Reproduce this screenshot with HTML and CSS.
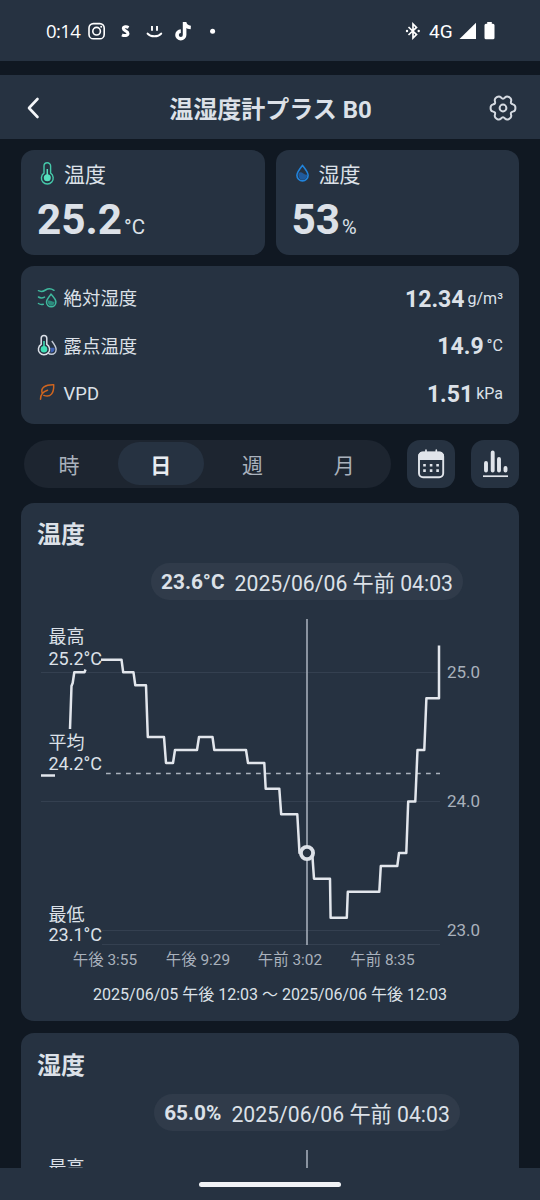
FILE: index.html
```html
<!DOCTYPE html>
<html lang="ja">
<head>
    <meta charset="UTF-8">
    <meta name="viewport" content="width=device-width, initial-scale=1.0">
    <title>温湿度計プラス B0</title>
    <link rel="stylesheet" href="styles.css">
</head>
<body>
    <div class="screen">
        <div class="status-bar">
            <span class="clock">0:14</span>
            <svg class="status-left" width="140" height="24" viewBox="84 19 140 24">
                <g fill="none" stroke="#fff" stroke-width="1.6">
                    <rect x="89" y="23.6" width="15.2" height="15.2" rx="4.4"/>
                    <circle cx="96.6" cy="31.2" r="3.8"/>
                    <path d="M147.600 33.600c2.800 3.600 10.800 3.600 13.600 0" stroke-width="2" stroke-linecap="round"/>
                    <path d="M152 26v4.800M157 26v4.800" stroke-width="1.9"/>
                    <path d="M128.600 27.500c-2.200-1.200-5.200-.9-5.300 1.100 0 2.500 4.700 2.100 4.700 4.900 0 2.300-3.700 2.600-6 1.400" stroke-width="3"/>
                    <path d="M184.600 22v12.900a3.800 3.800 0 1 1-3.800-3.800M184.600 22.300c.4 3 2.700 5 6.200 5.200" stroke-width="3.600"/>
                </g>
                <circle cx="101.200" cy="26.800" r="1" fill="#fff"/>
                <circle cx="212.600" cy="31.200" r="2.500" fill="#fff"/>
            </svg>
            <svg class="bluetooth" width="16" height="20" viewBox="0 0 16 20">
                <path d="M3.500 6 11.500 13.600 8 17V3l3.500 3.400L3.500 14" fill="none" stroke="#fff" stroke-width="1.7"/>
                <circle cx="2" cy="10" r="1.200" fill="#fff"/>
                <circle cx="13.700" cy="10" r="1.200" fill="#fff"/>
            </svg>
            <span class="network">4G</span>
            <svg class="signal" width="18" height="18" viewBox="0 0 18 18">
                <path d="M0.500 17 17 .8V17z" fill="#fff"/>
            </svg>
            <svg class="battery" width="11" height="18" viewBox="0 0 11 18">
                <path d="M3.200 0h4.600v1.700H9a1.500 1.500 0 0 1 1.500 1.500v12.600A1.500 1.500 0 0 1 9 17.300H2a1.500 1.500 0 0 1-1.500-1.500V3.200A1.500 1.500 0 0 1 2 1.700h1.200z" fill="#fff"/>
            </svg>
        </div>

        <div class="header">
            <svg class="back" width="14" height="22" viewBox="0 0 14 22">
                <path d="M11.500 2 3 11l8.500 9" fill="none" stroke="#f4f6f9" stroke-width="2.600" stroke-linecap="round" stroke-linejoin="round"/>
            </svg>
            <h1>温湿度計プラス B0</h1>
            <svg class="gear" width="28" height="28" viewBox="-14 -14 28 28">
                <g fill="none" stroke="#d5dae1" stroke-width="2">
                    <path id="gear-half" d="M12.400 0Q12.470 2.880 10.450 3.400 8.430 3.930 8.030 4.630 7.620 5.330 8.180 7.350 8.730 9.360 6.240 10.800 3.740 12.240 2.280 10.750.810 9.260 0 9.260-.810 9.260-2.280 10.750-3.740 12.240-6.240 10.800-8.730 9.360-8.180 7.350-7.620 5.330-8.030 4.630-8.430 3.930-10.450 3.400-12.470 2.880-12.400 0"/>
                    <use href="#gear-half" transform="scale(1 -1)"/>
                    <circle r="3.400"/>
                </g>
            </svg>
        </div>

        <div class="content">
            <div class="summary">
                <div class="card reading">
                    <div class="reading-label">
                        <svg class="icon" width="20" height="24" viewBox="0 0 20 24">
                            <path d="M7 12.200V5a3.300 3.300 0 0 1 6.600 0v7.200a5.900 5.900 0 1 1-6.600 0z" fill="none" stroke="#45c9aa" stroke-width="1.400"/>
                            <path d="M10.300 8v8" stroke="#55e0bd" stroke-width="1.500"/>
                            <circle cx="10.300" cy="16.700" r="3.500" fill="#55e0bd"/>
                        </svg>
                        <span>温度</span>
                    </div>
                    <div class="reading-value">25.2<span class="unit">°C</span></div>
                </div>
                <div class="card reading">
                    <div class="reading-label">
                        <svg class="icon" width="20" height="24" viewBox="0 0 20 24">
                            <path d="M10.500 4.400c-3 3.700-5.600 6.800-5.600 9.900a5.600 5.600 0 0 0 11.200 0c0-3.100-2.600-6.200-5.600-9.900z" fill="#263241" stroke="#2184dc" stroke-width="1.600"/>
                            <path d="M6.600 12q2.400-1.500 4.400.3t4 1.200c.5 3-1.600 5.300-4.500 5.300s-4.600-3-3.900-6.800z" fill="#205a9c"/>
                        </svg>
                        <span>湿度</span>
                    </div>
                    <div class="reading-value">53<span class="unit percent">%</span></div>
                </div>
            </div>

            <div class="card details">
                <div class="detail-row">
                    <svg class="icon" width="20" height="22" viewBox="0 0 20 22">
                        <g fill="none" stroke="#3fb99e" stroke-width="1.500" stroke-linecap="round">
                            <path d="M1.500 3.700c3 1.600 5 .6 7-.7s5.500-1.700 8.500.3M1.500 10c2 1.300 4 1.100 6 .1M1.500 16.500c1.500 1 3 1.300 4.700.8"/>
                            <path d="M14 7.200c-2.500 3-4.500 5.400-4.500 7.900a4.700 4.700 0 0 0 9.400 0c0-2.500-2.200-4.900-4.900-7.900z"/>
                        </g>
                        <path d="M10.800 13.800c2.300-1 4.300 1.400 6.800.8.300 2.500-1.300 4.200-3.400 4.200s-3.900-2.300-3.400-5z" fill="#2b8b7d"/>
                    </svg>
                    <span class="detail-label">絶対湿度</span>
                    <span class="detail-value">12.34</span>
                    <span class="detail-unit">g/m³</span>
                </div>
                <div class="detail-row">
                    <svg class="icon" width="20" height="22" viewBox="0 0 20 22">
                        <path d="M14.800 7c2.500 3.200 4.300 5.700 4.300 8.500 0 2.800-2 4.700-4.500 4.700-1.500 0-2.600-.4-3.500-1.300" fill="none" stroke="#c3cad6" stroke-width="1.400"/>
                        <path d="M13 13.800h4.600c.2 3-1.300 5-4.400 4.800.9-1.500.9-3-.2-4.800z" fill="#3d60b4"/>
                        <path d="M4.200 10.400V4.200a2.800 2.800 0 0 1 5.600 0v6.200a5.600 5.600 0 1 1-5.600 0z" fill="#263241" stroke="#dce1e8" stroke-width="1.500"/>
                        <path d="M7 7v8" stroke="#40d9b2" stroke-width="1.600"/>
                        <circle cx="7" cy="15.200" r="3.300" fill="#40dfb6"/>
                    </svg>
                    <span class="detail-label">露点温度</span>
                    <span class="detail-value">14.9</span>
                    <span class="detail-unit">°C</span>
                </div>
                <div class="detail-row">
                    <svg class="icon" width="20" height="22" viewBox="0 0 20 22">
                        <path d="M3.500 17.200c0-5 2.500-7.500 7-8.900M5.200 11C3.400 6 8 2.500 16.700 2.700c.3 8.400-3 13.200-9.900 10.700" fill="none" stroke="#cf651f" stroke-width="1.500" stroke-linecap="round" stroke-linejoin="round"/>
                    </svg>
                    <span class="detail-label latin">VPD</span>
                    <span class="detail-value">1.51</span>
                    <span class="detail-unit">kPa</span>
                </div>
            </div>

            <div class="toolbar">
                <div class="tabs">
                    <button class="tab">時</button>
                    <button class="tab active">日</button>
                    <button class="tab">週</button>
                    <button class="tab">月</button>
                </div>
                <button class="tool-button" aria-label="カレンダー">
                    <svg width="28" height="30" viewBox="0 0 28 30">
                        <rect x="2" y="3.500" width="24.200" height="24.800" rx="4" fill="none" stroke="#e0e4ea" stroke-width="1.900"/>
                        <path d="M1.200 11V7a4.200 4.200 0 0 1 4.200-4.200h17.400A4.200 4.200 0 0 1 27 7v4z" fill="#e0e4ea"/>
                        <path d="M9 1.200v4M19.300 1.200v4" stroke="#e0e4ea" stroke-width="1.700" stroke-linecap="round"/>
                        <path d="M6.200 14.900h2.600v2.600H6.200zM12.800 14.900h2.600v2.600h-2.600zM19.300 14.900h2.600v2.600h-2.600zM6.200 20.300h2.600v2.600H6.200zM12.800 20.300h2.600v2.600h-2.600zM19.300 20.300h2.600v2.600h-2.600z" fill="#e0e4ea"/>
                    </svg>
                </button>
                <button class="tool-button" aria-label="グラフ">
                    <svg width="28" height="30" viewBox="0 0 28 30">
                        <path d="M5 14v7.500M11.700 3.500v18M18 10v11.500M24.500 19v2.500" stroke="#e0e4ea" stroke-width="3.900" stroke-linecap="round"/>
                        <path d="M2 27.200h25" stroke="#e0e4ea" stroke-width="1.700"/>
                    </svg>
                </button>
            </div>

            <div class="card chart-card">
                <h2>温度</h2>
                <div class="pill-row">
                    <div class="pill"><strong>23.6°C</strong><span>2025/06/06 午前 04:03</span></div>
                </div>
                <svg class="chart" width="498" height="360" viewBox="21 610 498 360">
                    <g class="grid">
                        <path d="M41 672.500H440M41 801.500H440M102 930.500H440M102 944.500H440"/>
                    </g>
                    <path class="average" d="M106 773.500H440"/>
                    <path class="cursor" d="M307 619V945"/>
                    <path class="series" d="M41 775.500H55"/>
                    <path class="series" d="M70 729 71.500 686 72.700 683 74.300 672.300H84.500L85.500 669.500"/>
                    <path class="series" d="M101 659.700H121.500L123.200 672.300H133.500L135.300 685.300H146L147.800 737H164L166 763H173L175 750H197L199 737H212.500L214.300 750H246L248 763H264.300L265.700 788.700H279.300L281.200 814.300H297.300L299.500 853H312.200L314 878.700H330L330.600 917.700H346.800L347.800 891.700H379.300L380.800 866H397.300L399 853H406.300L408.200 801.500H415.300L417.500 750H424.300L426.400 698.300H439V645.500"/>
                    <circle class="marker" cx="307" cy="853" r="6.100"/>
                    <g class="stat">
                        <text x="48.500" y="643.300">最高</text>
                        <text x="48.500" y="664.500">25.2°C</text>
                        <text x="48.500" y="749">平均</text>
                        <text x="48.500" y="770">24.2°C</text>
                        <text x="48.500" y="920.500">最低</text>
                        <text x="48.500" y="941">23.1°C</text>
                    </g>
                    <g class="y-axis">
                        <text x="447" y="677.700">25.0</text>
                        <text x="447" y="806.700">24.0</text>
                        <text x="447" y="935.700">23.0</text>
                    </g>
                    <g class="x-axis">
                        <text x="105" y="964.700">午後 3:55</text>
                        <text x="198" y="964.700">午後 9:29</text>
                        <text x="290" y="964.700">午前 3:02</text>
                        <text x="382.500" y="964.700">午前 8:35</text>
                    </g>
                </svg>
                <p class="range">2025/06/05 午後 12:03 〜 2025/06/06 午後 12:03</p>
            </div>

            <div class="card chart-card">
                <h2>湿度</h2>
                <div class="pill-row">
                    <div class="pill"><strong>65.0%</strong><span>2025/06/06 午前 04:03</span></div>
                </div>
                <svg class="chart" width="498" height="360" viewBox="21 610 498 360">
                    <path class="cursor" d="M307 619V945"/>
                    <g class="stat">
                        <text x="48.500" y="643.300">最高</text>
                    </g>
                </svg>
            </div>
        </div>

        <div class="nav-bar"><span class="handle"></span></div>
    </div>
</body>
</html>
```

FILE: styles.css
```css
* {
    box-sizing: border-box;
}
body {
    margin: 0;
    background: #101822;
    color: #dce1e8;
    font-family: Roboto, "Noto Sans CJK JP", sans-serif;
}
h1, h2, p {
    margin: 0;
}
button {
    border: none;
    padding: 0;
    font-family: inherit;
}
svg {
    display: block;
    flex: none;
}
.screen {
    display: flex;
    flex-direction: column;
    width: 540px;
    height: 1200px;
    overflow: hidden;
}
.status-bar {
    display: flex;
    align-items: center;
    flex: none;
    height: 61px;
    padding: 1px 45px 0 46px;
    background: #263241;
    color: #fff;
}
.clock {
    width: 38px;
    padding-bottom: 2px;
    font-family: "Open Sans", sans-serif;
    font-size: 18.5px;
    font-weight: 500;
    letter-spacing: -0.6px;
}
.bluetooth {
    margin-left: auto;
}
.network {
    width: 25px;
    margin: 0 6px 0 8px;
    font-size: 19px;
}
.signal {
    margin-right: 7px;
    margin-left: -1px;
}
.header {
    display: flex;
    align-items: center;
    justify-content: space-between;
    flex: none;
    height: 64px;
    margin-top: 14px;
    padding: 1px 23px 0 26px;
    background: #263241;
}
.header h1 {
    margin-left: 12px;
    padding-top: 4px;
    font-size: 24px;
    line-height: 36px;
    font-weight: 700;
}
.content {
    flex: 1;
    min-height: 0;
    overflow: hidden;
    padding: 11px 21px 0;
}
.card {
    background: #263241;
    border-radius: 13px;
}
.summary {
    display: grid;
    grid-template-columns: 1fr 1fr;
    gap: 11px;
}
.reading {
    height: 105px;
    padding: 9px 16px;
}
.reading-label {
    display: flex;
    align-items: center;
    gap: 7px;
    height: 28px;
    font-size: 21px;
}
.reading-label .icon {
    margin-top: -1px;
}
.reading-value {
    margin-top: 8px;
    font-size: 42.3px;
    line-height: 50px;
    font-weight: 700;
}
.unit {
    margin-left: 2px;
    font-size: 20.5px;
    font-weight: 400;
}
.percent {
    font-size: 20px;
}
.details {
    height: 158px;
    margin-top: 11px;
    padding: 8px 16px;
}
.detail-row {
    display: flex;
    align-items: center;
    height: 47.5px;
}
.detail-label {
    flex: 1;
    margin-left: 6.6px;
    padding-bottom: 1px;
    font-size: 18.4px;
}
.detail-label.latin {
    padding: 2px 0 0;
}
.detail-value {
    padding-top: 3px;
    font-size: 23px;
    font-weight: 700;
}
.detail-unit {
    margin-left: 3px;
    padding-top: 1px;
    font-size: 16px;
}
.toolbar {
    display: flex;
    gap: 16px;
    margin-top: 16px;
    padding-left: 3px;
}
.tabs {
    display: flex;
    flex: 1;
    height: 48px;
    background: #1d2530;
    border-radius: 24px;
}
.tab {
    flex: 1;
    margin: 2px 4px 3px 2px;
    background: none;
    border-radius: 22px;
    color: #a9b1bc;
    font-size: 21px;
}
.tab.active {
    background: #263241;
    color: #e8ecf1;
    font-weight: 700;
}
.tool-button {
    display: flex;
    align-items: center;
    justify-content: center;
    width: 48px;
    height: 48px;
    background: #263241;
    border-radius: 13px;
}
.chart-card {
    height: 518px;
    margin-top: 15px;
    padding-top: 14px;
}
.chart-card + .chart-card {
    margin-top: 12px;
    padding-top: 15px;
}
.chart-card h2 {
    padding-left: 16px;
    font-size: 24px;
    line-height: 37px;
    font-weight: 700;
}
.pill-row {
    display: flex;
    justify-content: center;
    margin-top: 9px;
    padding-left: 74px;
}
.pill {
    display: flex;
    align-items: center;
    gap: 10px;
    height: 37px;
    padding: 0 10px;
    background: #303b4a;
    border-radius: 19px;
    font-size: 21.2px;
    white-space: nowrap;
}
.pill strong {
    padding-top: 1px;
    font-size: 20.8px;
}
.pill span {
    padding-bottom: 1px;
}
.chart {
    margin-top: 10px;
}
.grid {
    stroke: #344050;
    stroke-width: 1;
}
.average {
    stroke: #aab2bd;
    stroke-width: 1.4;
    stroke-dasharray: 4.7 5.3;
}
.cursor {
    stroke: #a4acb8;
    stroke-width: 1.6;
}
.series {
    fill: none;
    stroke: #e2e6ec;
    stroke-width: 2.5;
    stroke-linejoin: round;
}
.marker {
    fill: #263241;
    stroke: #dce1e8;
    stroke-width: 3.8;
}
.stat {
    fill: #dce1e8;
    font-size: 18px;
}
.y-axis {
    fill: #a9b1bc;
    font-size: 17px;
}
.x-axis {
    fill: #a9b1bc;
    font-size: 15.4px;
    text-anchor: middle;
}
.range {
    margin-top: 13px;
    font-size: 16px;
    line-height: 24px;
    text-align: center;
}
.nav-bar {
    display: flex;
    justify-content: center;
    align-items: center;
    flex: none;
    height: 32px;
    background: #263241;
}
.handle {
    width: 142px;
    height: 5px;
    background: #f1f3f6;
    border-radius: 3px;
}
```
